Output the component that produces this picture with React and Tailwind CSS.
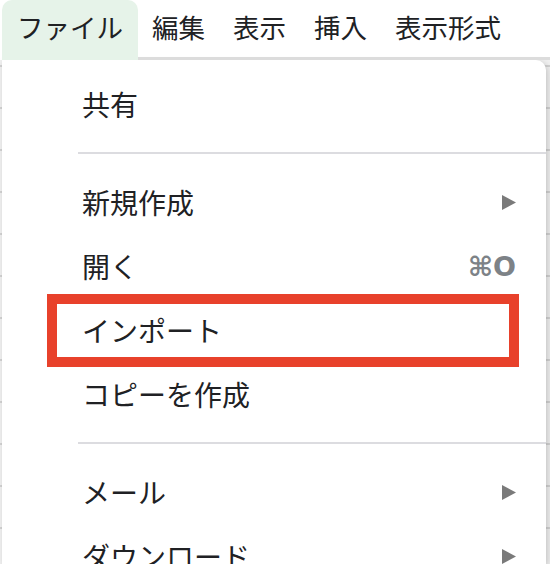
import React from 'react';

const jp = "font-['Noto_Sans_CJK_JP','Noto_Sans',sans-serif]";

function Arrow() {
  return (
    <svg width="14" height="15" viewBox="0 0 14 15" className="shrink-0">
      <polygon points="0,0 14,7.5 0,15" fill="#7a7a7a" />
    </svg>
  );
}

function Item({ label, right }) {
  return (
    <div className="h-[64px] flex items-center justify-between pl-[80px] pr-[30px]">
      <span className={`text-[28px] leading-none text-[#202124] ${jp}`}>{label}</span>
      {right}
    </div>
  );
}

function Separator() {
  return (
    <div className="py-4 pl-[76px]">
      <div className="h-[2px] bg-[#dcdce0]" />
    </div>
  );
}

export default function App() {
  const tabs = ['編集', '表示', '挿入', '表示形式'];

  return (
    <div className={`w-[550px] h-[564px] relative overflow-hidden bg-[repeating-linear-gradient(to_bottom,#f0f0f0_0px,#f0f0f0_23px,#d2d2d2_23px,#d2d2d2_25px,#f0f0f0_25px,#f0f0f0_42px)] ${jp}`}>
      {/* menu bar */}
      <div className="h-[60px] flex bg-white pl-[2px]">
        <div className="h-[60px] bg-[#e6f3e9] rounded-t-[10px] px-[15px] flex items-center pb-[6px]">
          <span className="text-[26.5px] leading-none text-[#202124]">ファイル</span>
        </div>
        <div className="flex-1 h-[60px] flex items-center pb-[3px] border-b-[3px] border-[#dcdcdc]">
          {tabs.map((t) => (
            <div key={t} className="px-[14px] flex items-center">
              <span className="text-[26.5px] leading-none text-[#202124]">{t}</span>
            </div>
          ))}
        </div>
      </div>

      {/* dropdown */}
      <div className="ml-[2px] w-[544px] h-[504px] bg-white rounded-tr-[10px] shadow-[2px_2px_6px_rgba(0,0,0,0.18)] pt-[12px]">
        <Item label="共有" />
        <Separator />
        <Item label="新規作成" right={<Arrow />} />
        <Item
          label="開く"
          right={
            <span className="text-[27px] leading-none font-bold text-[#7d8287] font-['DejaVu_Sans','Liberation_Sans',sans-serif]">
              ⌘O
            </span>
          }
        />
        <Item label="インポート" />
        <Item label="コピーを作成" />
        <Separator />
        <Item label="メール" right={<Arrow />} />
        <Item label="ダウンロード" right={<Arrow />} />
      </div>

      {/* highlight */}
      <div className="absolute left-[47px] top-[294px] w-[472px] h-[73px] border-[10px] border-[#e8412b]" />
    </div>
  );
}
